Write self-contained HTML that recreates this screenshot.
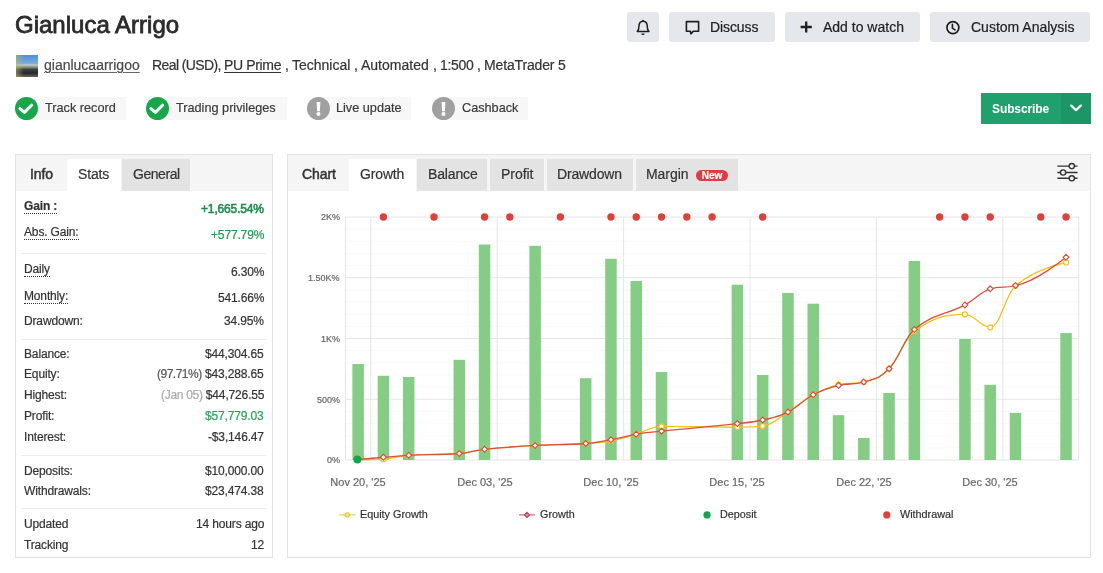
<!DOCTYPE html>
<html><head><meta charset="utf-8"><title>Gianluca Arrigo</title>
<style>
html,body{margin:0;padding:0;}
body{width:1103px;height:573px;overflow:hidden;background:#fff;position:relative;font-family:"Liberation Sans", sans-serif;}
.t{position:absolute;white-space:nowrap;line-height:1;will-change:transform;-webkit-text-stroke-width:0.2px;}
.r{position:absolute;box-sizing:border-box;}
div.r[style*="border:"]{box-sizing:border-box;}
u{text-underline-offset:2px;}
</style></head><body>
<div class="t " style="left:15.40px;top:12.88px;font-size:24px;color:#2b2b2b;font-weight:400;letter-spacing:0px;-webkit-text-stroke:0.8px #2b2b2b;">Gianluca Arrigo</div>
<div class="r" style="left:16px;top:55px;width:22px;height:22px;background:linear-gradient(90deg,rgba(190,190,90,.55) 0%,rgba(190,190,90,0) 35%),linear-gradient(180deg,#4d8fd6 0%,#78ade0 38%,#c0ccd0 45%,#8e9478 55%,#3c4044 66%,#23262b 82%,#6a6660 100%);"></div>
<div class="t " style="left:43.90px;top:58.15px;font-size:14px;color:#4a4a4a;font-weight:400;letter-spacing:0px;text-decoration:underline;text-underline-offset:2px;text-decoration-color:#666;">gianlucaarrigoo</div>
<div class="t " style="left:151.80px;top:57.75px;font-size:14px;color:#333;font-weight:400;letter-spacing:-0.6px;">Real (USD),</div>
<div class="t " style="left:224.00px;top:57.75px;font-size:14px;color:#333;font-weight:400;letter-spacing:-0.35px;"><u>PU Prime</u></div>
<div class="t " style="left:285.30px;top:57.75px;font-size:14px;color:#333;font-weight:400;letter-spacing:0px;">,</div>
<div class="t " style="left:291.60px;top:57.75px;font-size:14px;color:#333;font-weight:400;letter-spacing:0px;">Technical</div>
<div class="t " style="left:354.00px;top:57.75px;font-size:14px;color:#333;font-weight:400;letter-spacing:0px;">,</div>
<div class="t " style="left:360.60px;top:57.75px;font-size:14px;color:#333;font-weight:400;letter-spacing:0px;">Automated</div>
<div class="t " style="left:432.60px;top:57.75px;font-size:14px;color:#333;font-weight:400;letter-spacing:0px;">,</div>
<div class="t " style="left:439.60px;top:57.75px;font-size:14px;color:#333;font-weight:400;letter-spacing:-0.3px;">1:500</div>
<div class="t " style="left:476.60px;top:57.75px;font-size:14px;color:#333;font-weight:400;letter-spacing:0px;">,</div>
<div class="t " style="left:484.00px;top:57.75px;font-size:14px;color:#333;font-weight:400;letter-spacing:-0.15px;">MetaTrader 5</div>
<div class="r" style="left:26.5px;top:97px;width:99.5px;height:23px;background:#f7f7f7;"></div>
<svg class="r" style="left:15.00px;top:96.8px;width:23px;height:23px" viewBox="0 0 23 23"><circle cx="11.5" cy="11.5" r="11.5" fill="#18a64a"/><path d="M5.0 11.6 L9.4 15.4 L16.6 8.2" fill="none" stroke="#fff" stroke-width="3.0" stroke-linecap="round" stroke-linejoin="round"/></svg>
<div class="t " style="left:44.80px;top:102.15px;font-size:12.7px;color:#3a3a3a;font-weight:400;letter-spacing:0px;">Track record</div>
<div class="r" style="left:157.5px;top:97px;width:129.5px;height:23px;background:#f7f7f7;"></div>
<svg class="r" style="left:146.00px;top:96.8px;width:23px;height:23px" viewBox="0 0 23 23"><circle cx="11.5" cy="11.5" r="11.5" fill="#18a64a"/><path d="M5.0 11.6 L9.4 15.4 L16.6 8.2" fill="none" stroke="#fff" stroke-width="3.0" stroke-linecap="round" stroke-linejoin="round"/></svg>
<div class="t " style="left:175.50px;top:102.15px;font-size:12.7px;color:#3a3a3a;font-weight:400;letter-spacing:0px;">Trading privileges</div>
<div class="r" style="left:318.5px;top:97px;width:92.5px;height:23px;background:#f7f7f7;"></div>
<svg class="r" style="left:307.00px;top:96.8px;width:23px;height:23px" viewBox="0 0 23 23"><circle cx="11.5" cy="11.5" r="11.5" fill="#a0a0a0"/><path d="M9.6 5.6 Q9.6 5.0 10.2 5.0 L12.8 5.0 Q13.4 5.0 13.4 5.6 L12.9 14.2 L10.1 14.2 Z" fill="#fff"/><circle cx="11.5" cy="16.9" r="2.0" fill="#fff"/></svg>
<div class="t " style="left:336.00px;top:102.15px;font-size:12.7px;color:#3a3a3a;font-weight:400;letter-spacing:0px;">Live update</div>
<div class="r" style="left:443.5px;top:97px;width:84.5px;height:23px;background:#f7f7f7;"></div>
<svg class="r" style="left:432.00px;top:96.8px;width:23px;height:23px" viewBox="0 0 23 23"><circle cx="11.5" cy="11.5" r="11.5" fill="#a0a0a0"/><path d="M9.6 5.6 Q9.6 5.0 10.2 5.0 L12.8 5.0 Q13.4 5.0 13.4 5.6 L12.9 14.2 L10.1 14.2 Z" fill="#fff"/><circle cx="11.5" cy="16.9" r="2.0" fill="#fff"/></svg>
<div class="t " style="left:461.60px;top:102.15px;font-size:12.7px;color:#3a3a3a;font-weight:400;letter-spacing:0px;">Cashback</div>
<div class="r" style="left:627px;top:12px;width:32px;height:30px;background:#e4e7eb;border-radius:3px;"></div>
<div class="r" style="left:669px;top:12px;width:106px;height:30px;background:#e4e7eb;border-radius:3px;"></div>
<div class="r" style="left:785px;top:12px;width:135px;height:30px;background:#e4e7eb;border-radius:3px;"></div>
<div class="r" style="left:930px;top:12px;width:160px;height:30px;background:#e4e7eb;border-radius:3px;"></div>
<svg class="r" style="left:627px;top:12px;width:32px;height:30px" viewBox="0 0 32 30"><path d="M10.3 19.4 L21.9 19.4 C20.6 18.2 20.3 17 20.3 14.8 C20.3 11.3 18.6 9.2 16.1 9.2 C13.6 9.2 11.9 11.3 11.9 14.8 C11.9 17 11.6 18.2 10.3 19.4 Z" fill="none" stroke="#1e1e1e" stroke-width="1.5" stroke-linejoin="round"/><path d="M14.3 21.4 A1.7 1.7 0 0 0 17.7 21.4 Z" fill="#1e1e1e"/><circle cx="16" cy="8.6" r="0.9" fill="#1e1e1e"/></svg>
<svg class="r" style="left:669px;top:12px;width:40px;height:30px" viewBox="0 0 40 30"><path d="M17.4 9.6 L29.6 9.6 L29.6 19.2 L24.5 19.2 L21.8 21.8 L21.4 19.2 L17.4 19.2 Z" fill="none" stroke="#1e1e1e" stroke-width="1.6" stroke-linejoin="round"/></svg>
<svg class="r" style="left:785px;top:12px;width:40px;height:30px" viewBox="0 0 40 30"><path d="M21.2 9.4 V20.6 M15.6 15 H26.8" stroke="#1e1e1e" stroke-width="2.3"/></svg>
<svg class="r" style="left:930px;top:12px;width:40px;height:30px" viewBox="0 0 40 30"><circle cx="22.9" cy="15.6" r="6.0" fill="none" stroke="#1e1e1e" stroke-width="1.7"/><path d="M22.4 12.2 V16.2 L25 17.9" fill="none" stroke="#1e1e1e" stroke-width="1.6" stroke-linecap="round" stroke-linejoin="round"/></svg>
<div class="t " style="left:709.90px;top:19.95px;font-size:14px;color:#222;font-weight:400;letter-spacing:-0.1px;">Discuss</div>
<div class="t " style="left:822.60px;top:19.95px;font-size:14px;color:#222;font-weight:400;letter-spacing:0px;">Add to watch</div>
<div class="t " style="left:970.60px;top:19.95px;font-size:14px;color:#222;font-weight:400;letter-spacing:0px;">Custom Analysis</div>
<div class="r" style="left:981px;top:93px;width:80px;height:31px;background:#20a06e;"></div>
<div class="r" style="left:1061px;top:93px;width:30px;height:31px;background:#1c9567;"></div>
<div class="t " style="left:992.40px;top:102.94px;font-size:12px;color:#fff;font-weight:700;letter-spacing:-0.1px;-webkit-text-stroke-width:0;">Subscribe</div>
<svg class="r" style="left:1061px;top:93px;width:30px;height:31px" viewBox="0 0 30 31"><path d="M10.2 12.6 L15 17.2 L19.8 12.6" fill="none" stroke="#fff" stroke-width="2.2" stroke-linecap="round" stroke-linejoin="round"/></svg>
<div class="r" style="left:15px;top:154px;width:258px;height:404px;border:1px solid #e3e3e3;background:#fff"></div>
<div class="r" style="left:16px;top:155px;width:256px;height:36px;background:#f5f5f5;"></div>
<div class="r" style="left:67px;top:159px;width:54px;height:32px;background:#fff;"></div>
<div class="r" style="left:122px;top:159px;width:68px;height:32px;background:#e3e3e3;"></div>
<div class="t " style="left:30.10px;top:166.95px;font-size:14px;color:#333;font-weight:400;letter-spacing:-0.1px;-webkit-text-stroke:0.5px #333;">Info</div>
<div class="t " style="left:77.90px;top:166.95px;font-size:14px;color:#333;font-weight:400;letter-spacing:-0.15px;">Stats</div>
<div class="t " style="left:132.90px;top:166.95px;font-size:14px;color:#333;font-weight:400;letter-spacing:-0.45px;">General</div>
<div class="t " style="left:24.00px;top:200.14px;font-size:12px;color:#333;font-weight:700;letter-spacing:-0.15px;border-bottom:1px dotted #333;padding-bottom:0px;line-height:13px;">Gain :</div>
<div class="t " style="right:839.10px;top:202.74px;font-size:12px;color:#333;font-weight:400;letter-spacing:-0.15px;"><span style="color:#1e8c4c;-webkit-text-stroke:0.55px #1e8c4c">+1,665.54%</span></div>
<div class="t " style="left:24.00px;top:225.64px;font-size:12px;color:#333;font-weight:400;letter-spacing:-0.15px;border-bottom:1px dotted #333;padding-bottom:0px;line-height:13px;">Abs. Gain:</div>
<div class="t " style="right:839.10px;top:228.64px;font-size:12px;color:#333;font-weight:400;letter-spacing:-0.15px;"><span style="color:#22994f">+577.79%</span></div>
<div class="t " style="left:24.00px;top:262.84px;font-size:12px;color:#333;font-weight:400;letter-spacing:-0.15px;border-bottom:1px dotted #333;padding-bottom:0px;line-height:13px;">Daily</div>
<div class="t " style="right:839.10px;top:265.64px;font-size:12px;color:#333;font-weight:400;letter-spacing:-0.15px;">6.30%</div>
<div class="t " style="left:24.00px;top:289.94px;font-size:12px;color:#333;font-weight:400;letter-spacing:-0.15px;border-bottom:1px dotted #333;padding-bottom:0px;line-height:13px;">Monthly:</div>
<div class="t " style="right:839.10px;top:291.54px;font-size:12px;color:#333;font-weight:400;letter-spacing:-0.15px;">541.66%</div>
<div class="t " style="left:24.00px;top:315.34px;font-size:12px;color:#333;font-weight:400;letter-spacing:-0.15px;">Drawdown:</div>
<div class="t " style="right:839.10px;top:315.34px;font-size:12px;color:#333;font-weight:400;letter-spacing:-0.15px;">34.95%</div>
<div class="t " style="left:24.00px;top:347.64px;font-size:12px;color:#333;font-weight:400;letter-spacing:-0.15px;">Balance:</div>
<div class="t " style="right:839.10px;top:347.54px;font-size:12px;color:#333;font-weight:400;letter-spacing:-0.15px;">$44,304.65</div>
<div class="t " style="left:24.00px;top:368.34px;font-size:12px;color:#333;font-weight:400;letter-spacing:-0.15px;">Equity:</div>
<div class="t " style="right:839.10px;top:368.24px;font-size:12px;color:#333;font-weight:400;letter-spacing:-0.15px;"><span style="color:#555;letter-spacing:-0.5px">(97.71%)</span> $43,288.65</div>
<div class="t " style="left:24.00px;top:389.34px;font-size:12px;color:#333;font-weight:400;letter-spacing:-0.15px;">Highest:</div>
<div class="t " style="right:839.10px;top:389.04px;font-size:12px;color:#333;font-weight:400;letter-spacing:-0.15px;"><span style="color:#aaa;letter-spacing:-0.3px">(Jan 05)</span> $44,726.55</div>
<div class="t " style="left:24.00px;top:410.34px;font-size:12px;color:#333;font-weight:400;letter-spacing:-0.15px;">Profit:</div>
<div class="t " style="right:839.10px;top:410.14px;font-size:12px;color:#333;font-weight:400;letter-spacing:-0.15px;"><span style="color:#27a55a">$57,779.03</span></div>
<div class="t " style="left:24.00px;top:430.94px;font-size:12px;color:#333;font-weight:400;letter-spacing:-0.15px;">Interest:</div>
<div class="t " style="right:839.10px;top:430.64px;font-size:12px;color:#333;font-weight:400;letter-spacing:-0.15px;">-$3,146.47</div>
<div class="t " style="left:24.00px;top:464.54px;font-size:12px;color:#333;font-weight:400;letter-spacing:-0.15px;">Deposits:</div>
<div class="t " style="right:839.10px;top:464.54px;font-size:12px;color:#333;font-weight:400;letter-spacing:-0.15px;">$10,000.00</div>
<div class="t " style="left:24.00px;top:485.34px;font-size:12px;color:#333;font-weight:400;letter-spacing:-0.15px;">Withdrawals:</div>
<div class="t " style="right:839.10px;top:485.34px;font-size:12px;color:#333;font-weight:400;letter-spacing:-0.15px;">$23,474.38</div>
<div class="t " style="left:24.00px;top:518.14px;font-size:12px;color:#333;font-weight:400;letter-spacing:-0.15px;">Updated</div>
<div class="t " style="right:839.10px;top:518.14px;font-size:12px;color:#333;font-weight:400;letter-spacing:-0.15px;">14 hours ago</div>
<div class="t " style="left:24.00px;top:538.84px;font-size:12px;color:#333;font-weight:400;letter-spacing:-0.15px;">Tracking</div>
<div class="t " style="right:839.10px;top:538.84px;font-size:12px;color:#333;font-weight:400;letter-spacing:-0.15px;">12</div>
<div class="r" style="left:21px;top:252.5px;width:245px;height:1.0px;background:#ebebeb;"></div>
<div class="r" style="left:21px;top:338.5px;width:245px;height:1.0px;background:#ebebeb;"></div>
<div class="r" style="left:21px;top:455px;width:245px;height:1px;background:#ebebeb;"></div>
<div class="r" style="left:21px;top:508px;width:245px;height:1px;background:#ebebeb;"></div>
<div class="r" style="left:287px;top:154px;width:804px;height:404px;border:1px solid #e3e3e3;background:#fff"></div>
<div class="r" style="left:288px;top:155px;width:802px;height:36px;background:#f5f5f5;"></div>
<div class="r" style="left:349px;top:159px;width:67px;height:32px;background:#fff;"></div>
<div class="r" style="left:417px;top:159px;width:70px;height:32px;background:#e3e3e3;"></div>
<div class="r" style="left:490px;top:159px;width:54px;height:32px;background:#e3e3e3;"></div>
<div class="r" style="left:547px;top:159px;width:86px;height:32px;background:#e3e3e3;"></div>
<div class="r" style="left:636px;top:159px;width:102px;height:32px;background:#e3e3e3;"></div>
<div class="t " style="left:302.30px;top:167.05px;font-size:14px;color:#333;font-weight:400;letter-spacing:-0.1px;-webkit-text-stroke:0.5px #333;">Chart</div>
<div class="t " style="left:359.80px;top:167.05px;font-size:14px;color:#333;font-weight:400;letter-spacing:-0.15px;">Growth</div>
<div class="t " style="left:427.60px;top:167.05px;font-size:14px;color:#333;font-weight:400;letter-spacing:-0.15px;">Balance</div>
<div class="t " style="left:500.80px;top:167.05px;font-size:14px;color:#333;font-weight:400;letter-spacing:-0.05px;">Profit</div>
<div class="t " style="left:557.40px;top:167.05px;font-size:14px;color:#333;font-weight:400;letter-spacing:-0.15px;">Drawdown</div>
<div class="t " style="left:646.30px;top:167.05px;font-size:14px;color:#333;font-weight:400;letter-spacing:-0.05px;">Margin</div>
<div class="r" style="left:696px;top:170px;width:32px;height:11px;background:#e03c45;border-radius:6px;"></div>
<div class="t " style="left:512.00px;width:400px;text-align:center;top:170.73px;font-size:10px;color:#fff;font-weight:700;letter-spacing:0px;">New</div>
<svg class="r" style="left:1050px;top:160px;width:36px;height:26px" viewBox="1050 160 36 26"><g stroke="#333" stroke-width="1.4" fill="none"><path d="M1057.4 166.1 H1069.2 M1074.4 166.1 H1077.5"/><path d="M1057.4 172.5 H1060.5 M1065.7 172.5 H1077.5"/><path d="M1057.4 178.3 H1069.2 M1074.4 178.3 H1077.5"/><circle cx="1071.8" cy="166.1" r="2.6"/><circle cx="1063.1" cy="172.5" r="2.6"/><circle cx="1071.8" cy="178.3" r="2.6"/></g></svg>
<svg class="r" style="left:0;top:0;width:1103px;height:573px" viewBox="0 0 1103 573"><line x1="345.5" x2="1078.7" y1="229.15" y2="229.15" stroke="#fafafa" stroke-width="1"/><line x1="345.5" x2="1078.7" y1="241.30" y2="241.30" stroke="#fafafa" stroke-width="1"/><line x1="345.5" x2="1078.7" y1="253.45" y2="253.45" stroke="#fafafa" stroke-width="1"/><line x1="345.5" x2="1078.7" y1="265.60" y2="265.60" stroke="#fafafa" stroke-width="1"/><line x1="345.5" x2="1078.7" y1="289.90" y2="289.90" stroke="#fafafa" stroke-width="1"/><line x1="345.5" x2="1078.7" y1="302.05" y2="302.05" stroke="#fafafa" stroke-width="1"/><line x1="345.5" x2="1078.7" y1="314.20" y2="314.20" stroke="#fafafa" stroke-width="1"/><line x1="345.5" x2="1078.7" y1="326.35" y2="326.35" stroke="#fafafa" stroke-width="1"/><line x1="345.5" x2="1078.7" y1="350.65" y2="350.65" stroke="#fafafa" stroke-width="1"/><line x1="345.5" x2="1078.7" y1="362.80" y2="362.80" stroke="#fafafa" stroke-width="1"/><line x1="345.5" x2="1078.7" y1="374.95" y2="374.95" stroke="#fafafa" stroke-width="1"/><line x1="345.5" x2="1078.7" y1="387.10" y2="387.10" stroke="#fafafa" stroke-width="1"/><line x1="345.5" x2="1078.7" y1="411.40" y2="411.40" stroke="#fafafa" stroke-width="1"/><line x1="345.5" x2="1078.7" y1="423.55" y2="423.55" stroke="#fafafa" stroke-width="1"/><line x1="345.5" x2="1078.7" y1="435.70" y2="435.70" stroke="#fafafa" stroke-width="1"/><line x1="345.5" x2="1078.7" y1="447.85" y2="447.85" stroke="#fafafa" stroke-width="1"/><line x1="345.5" x2="1078.7" y1="217.00" y2="217.00" stroke="#e6e6e6" stroke-width="1"/><line x1="345.5" x2="1078.7" y1="277.75" y2="277.75" stroke="#e6e6e6" stroke-width="1"/><line x1="345.5" x2="1078.7" y1="338.50" y2="338.50" stroke="#e6e6e6" stroke-width="1"/><line x1="345.5" x2="1078.7" y1="399.25" y2="399.25" stroke="#e6e6e6" stroke-width="1"/><line x1="345.5" x2="1078.7" y1="460.00" y2="460.00" stroke="#e6e6e6" stroke-width="1"/><line x1="345.50" x2="345.50" y1="217.0" y2="460.0" stroke="#e6e6e6" stroke-width="1"/><line x1="370.78" x2="370.78" y1="217.0" y2="460.0" stroke="#e6e6e6" stroke-width="1"/><line x1="497.20" x2="497.20" y1="217.0" y2="460.0" stroke="#e6e6e6" stroke-width="1"/><line x1="623.61" x2="623.61" y1="217.0" y2="460.0" stroke="#e6e6e6" stroke-width="1"/><line x1="750.02" x2="750.02" y1="217.0" y2="460.0" stroke="#e6e6e6" stroke-width="1"/><line x1="876.44" x2="876.44" y1="217.0" y2="460.0" stroke="#e6e6e6" stroke-width="1"/><line x1="1002.85" x2="1002.85" y1="217.0" y2="460.0" stroke="#e6e6e6" stroke-width="1"/><line x1="1078.70" x2="1078.70" y1="217.0" y2="460.0" stroke="#e6e6e6" stroke-width="1"/><rect x="352.39" y="364" width="11.5" height="96.00" fill="#85cc85"/><rect x="377.67" y="375.8" width="11.5" height="84.20" fill="#85cc85"/><rect x="402.96" y="377" width="11.5" height="83.00" fill="#85cc85"/><rect x="453.52" y="359.8" width="11.5" height="100.20" fill="#85cc85"/><rect x="478.81" y="244.5" width="11.5" height="215.50" fill="#85cc85"/><rect x="529.37" y="245.8" width="11.5" height="214.20" fill="#85cc85"/><rect x="579.94" y="378.2" width="11.5" height="81.80" fill="#85cc85"/><rect x="605.22" y="258.8" width="11.5" height="201.20" fill="#85cc85"/><rect x="630.50" y="281" width="11.5" height="179.00" fill="#85cc85"/><rect x="655.78" y="372" width="11.5" height="88.00" fill="#85cc85"/><rect x="731.63" y="284.7" width="11.5" height="175.30" fill="#85cc85"/><rect x="756.92" y="375" width="11.5" height="85.00" fill="#85cc85"/><rect x="782.20" y="293" width="11.5" height="167.00" fill="#85cc85"/><rect x="807.48" y="303.7" width="11.5" height="156.30" fill="#85cc85"/><rect x="832.76" y="415.2" width="11.5" height="44.80" fill="#85cc85"/><rect x="858.05" y="438" width="11.5" height="22.00" fill="#85cc85"/><rect x="883.33" y="393" width="11.5" height="67.00" fill="#85cc85"/><rect x="908.61" y="261" width="11.5" height="199.00" fill="#85cc85"/><rect x="959.18" y="339" width="11.5" height="121.00" fill="#85cc85"/><rect x="984.46" y="384.8" width="11.5" height="75.20" fill="#85cc85"/><rect x="1009.74" y="412.9" width="11.5" height="47.10" fill="#85cc85"/><rect x="1060.31" y="333.1" width="11.5" height="126.90" fill="#85cc85"/><path d="M 358.14 460.00 C 358.14 460.00 373.31 460.00 383.42 459.20 C 393.54 458.40 398.59 456.06 408.71 455.30 C 428.93 453.78 439.05 455.10 459.27 453.50 C 469.39 452.70 474.44 450.37 484.56 449.30 C 504.78 447.17 514.89 446.66 535.12 445.50 C 555.35 444.34 565.46 444.70 585.69 443.50 C 595.80 442.90 600.86 442.86 610.97 441.00 C 621.08 439.14 626.14 437.14 636.25 434.20 C 646.36 431.26 651.42 426.30 661.53 426.30 C 691.87 426.30 707.04 427.20 737.38 427.20 C 747.50 427.20 752.55 427.20 762.67 426.10 C 772.78 425.00 777.84 418.36 787.95 412.10 C 798.06 405.84 803.12 400.30 813.23 394.80 C 823.34 389.30 828.40 387.16 838.51 384.60 C 848.63 382.04 853.68 384.60 863.80 382.00 C 873.91 379.40 878.97 378.96 889.08 368.80 C 899.19 358.64 904.25 338.47 914.36 331.20 C 934.59 316.67 944.70 314.30 964.93 314.30 C 975.04 314.30 980.10 327.30 990.21 327.30 C 1000.32 327.30 1005.38 294.44 1015.49 285.80 C 1035.72 268.52 1066.06 262.50 1066.06 262.50" fill="none" stroke="#f2c21b" stroke-width="1.3"/><circle cx="358.14" cy="460.00" r="2.5" fill="#fff" stroke="#f2c21b" stroke-width="1.2"/><circle cx="383.42" cy="459.20" r="2.5" fill="#fff" stroke="#f2c21b" stroke-width="1.2"/><circle cx="408.71" cy="455.30" r="2.5" fill="#fff" stroke="#f2c21b" stroke-width="1.2"/><circle cx="459.27" cy="453.50" r="2.5" fill="#fff" stroke="#f2c21b" stroke-width="1.2"/><circle cx="484.56" cy="449.30" r="2.5" fill="#fff" stroke="#f2c21b" stroke-width="1.2"/><circle cx="535.12" cy="445.50" r="2.5" fill="#fff" stroke="#f2c21b" stroke-width="1.2"/><circle cx="585.69" cy="443.50" r="2.5" fill="#fff" stroke="#f2c21b" stroke-width="1.2"/><circle cx="610.97" cy="441.00" r="2.5" fill="#fff" stroke="#f2c21b" stroke-width="1.2"/><circle cx="636.25" cy="434.20" r="2.5" fill="#fff" stroke="#f2c21b" stroke-width="1.2"/><circle cx="661.53" cy="426.30" r="2.5" fill="#fff" stroke="#f2c21b" stroke-width="1.2"/><circle cx="737.38" cy="427.20" r="2.5" fill="#fff" stroke="#f2c21b" stroke-width="1.2"/><circle cx="762.67" cy="426.10" r="2.5" fill="#fff" stroke="#f2c21b" stroke-width="1.2"/><circle cx="787.95" cy="412.10" r="2.5" fill="#fff" stroke="#f2c21b" stroke-width="1.2"/><circle cx="813.23" cy="394.80" r="2.5" fill="#fff" stroke="#f2c21b" stroke-width="1.2"/><circle cx="838.51" cy="384.60" r="2.5" fill="#fff" stroke="#f2c21b" stroke-width="1.2"/><circle cx="863.80" cy="382.00" r="2.5" fill="#fff" stroke="#f2c21b" stroke-width="1.2"/><circle cx="889.08" cy="368.80" r="2.5" fill="#fff" stroke="#f2c21b" stroke-width="1.2"/><circle cx="914.36" cy="331.20" r="2.5" fill="#fff" stroke="#f2c21b" stroke-width="1.2"/><circle cx="964.93" cy="314.30" r="2.5" fill="#fff" stroke="#f2c21b" stroke-width="1.2"/><circle cx="990.21" cy="327.30" r="2.5" fill="#fff" stroke="#f2c21b" stroke-width="1.2"/><circle cx="1015.49" cy="285.80" r="2.5" fill="#fff" stroke="#f2c21b" stroke-width="1.2"/><circle cx="1066.06" cy="262.50" r="2.5" fill="#fff" stroke="#f2c21b" stroke-width="1.2"/><path d="M 358.14 459.50 C 358.14 459.50 373.31 458.14 383.42 457.30 C 393.54 456.46 398.59 455.81 408.71 455.30 C 428.93 454.29 439.05 455.10 459.27 453.50 C 469.39 452.70 474.44 450.37 484.56 449.30 C 504.78 447.17 514.89 446.66 535.12 445.50 C 555.35 444.34 565.46 445.02 585.69 443.50 C 595.80 442.74 600.86 441.66 610.97 439.80 C 621.08 437.94 626.14 435.92 636.25 434.20 C 646.36 432.48 651.42 432.26 661.53 431.20 C 691.87 428.02 707.04 426.96 737.38 423.60 C 747.50 422.48 752.55 422.30 762.67 420.00 C 772.78 417.70 777.84 417.14 787.95 412.10 C 798.06 407.06 803.12 400.14 813.23 394.80 C 823.34 389.46 828.40 387.96 838.51 385.40 C 848.63 382.84 853.68 385.32 863.80 382.00 C 873.91 378.68 878.97 379.28 889.08 368.80 C 899.19 358.32 904.25 338.12 914.36 329.60 C 934.59 312.56 944.70 315.78 964.93 304.90 C 975.04 299.46 980.10 292.10 990.21 288.80 C 1000.32 285.50 1005.38 288.80 1015.49 285.50 C 1035.72 282.20 1066.06 257.30 1066.06 257.30" fill="none" stroke="#d9503c" stroke-width="1.3"/><path d="M 358.14 456.60 L 361.04 459.50 L 358.14 462.40 L 355.24 459.50 Z" fill="#fff" stroke="#d9503c" stroke-width="1.2"/><path d="M 383.42 454.40 L 386.32 457.30 L 383.42 460.20 L 380.52 457.30 Z" fill="#fff" stroke="#d9503c" stroke-width="1.2"/><path d="M 408.71 452.40 L 411.61 455.30 L 408.71 458.20 L 405.81 455.30 Z" fill="#fff" stroke="#d9503c" stroke-width="1.2"/><path d="M 459.27 450.60 L 462.17 453.50 L 459.27 456.40 L 456.37 453.50 Z" fill="#fff" stroke="#d9503c" stroke-width="1.2"/><path d="M 484.56 446.40 L 487.46 449.30 L 484.56 452.20 L 481.66 449.30 Z" fill="#fff" stroke="#d9503c" stroke-width="1.2"/><path d="M 535.12 442.60 L 538.02 445.50 L 535.12 448.40 L 532.22 445.50 Z" fill="#fff" stroke="#d9503c" stroke-width="1.2"/><path d="M 585.69 440.60 L 588.59 443.50 L 585.69 446.40 L 582.79 443.50 Z" fill="#fff" stroke="#d9503c" stroke-width="1.2"/><path d="M 610.97 436.90 L 613.87 439.80 L 610.97 442.70 L 608.07 439.80 Z" fill="#fff" stroke="#d9503c" stroke-width="1.2"/><path d="M 636.25 431.30 L 639.15 434.20 L 636.25 437.10 L 633.35 434.20 Z" fill="#fff" stroke="#d9503c" stroke-width="1.2"/><path d="M 661.53 428.30 L 664.43 431.20 L 661.53 434.10 L 658.63 431.20 Z" fill="#fff" stroke="#d9503c" stroke-width="1.2"/><path d="M 737.38 420.70 L 740.28 423.60 L 737.38 426.50 L 734.48 423.60 Z" fill="#fff" stroke="#d9503c" stroke-width="1.2"/><path d="M 762.67 417.10 L 765.57 420.00 L 762.67 422.90 L 759.77 420.00 Z" fill="#fff" stroke="#d9503c" stroke-width="1.2"/><path d="M 787.95 409.20 L 790.85 412.10 L 787.95 415.00 L 785.05 412.10 Z" fill="#fff" stroke="#d9503c" stroke-width="1.2"/><path d="M 813.23 391.90 L 816.13 394.80 L 813.23 397.70 L 810.33 394.80 Z" fill="#fff" stroke="#d9503c" stroke-width="1.2"/><path d="M 838.51 382.50 L 841.41 385.40 L 838.51 388.30 L 835.61 385.40 Z" fill="#fff" stroke="#d9503c" stroke-width="1.2"/><path d="M 863.80 379.10 L 866.70 382.00 L 863.80 384.90 L 860.90 382.00 Z" fill="#fff" stroke="#d9503c" stroke-width="1.2"/><path d="M 889.08 365.90 L 891.98 368.80 L 889.08 371.70 L 886.18 368.80 Z" fill="#fff" stroke="#d9503c" stroke-width="1.2"/><path d="M 914.36 326.70 L 917.26 329.60 L 914.36 332.50 L 911.46 329.60 Z" fill="#fff" stroke="#d9503c" stroke-width="1.2"/><path d="M 964.93 302.00 L 967.83 304.90 L 964.93 307.80 L 962.03 304.90 Z" fill="#fff" stroke="#d9503c" stroke-width="1.2"/><path d="M 990.21 285.90 L 993.11 288.80 L 990.21 291.70 L 987.31 288.80 Z" fill="#fff" stroke="#d9503c" stroke-width="1.2"/><path d="M 1015.49 282.60 L 1018.39 285.50 L 1015.49 288.40 L 1012.59 285.50 Z" fill="#fff" stroke="#d9503c" stroke-width="1.2"/><path d="M 1066.06 254.40 L 1068.96 257.30 L 1066.06 260.20 L 1063.16 257.30 Z" fill="#fff" stroke="#d9503c" stroke-width="1.2"/><circle cx="357.34" cy="459.6" r="4" fill="#17a34a"/><circle cx="383.42" cy="217" r="3.7" fill="#e0403a"/><circle cx="433.99" cy="217" r="3.7" fill="#e0403a"/><circle cx="484.56" cy="217" r="3.7" fill="#e0403a"/><circle cx="509.84" cy="217" r="3.7" fill="#e0403a"/><circle cx="560.40" cy="217" r="3.7" fill="#e0403a"/><circle cx="610.97" cy="217" r="3.7" fill="#e0403a"/><circle cx="636.25" cy="217" r="3.7" fill="#e0403a"/><circle cx="661.53" cy="217" r="3.7" fill="#e0403a"/><circle cx="686.82" cy="217" r="3.7" fill="#e0403a"/><circle cx="712.10" cy="217" r="3.7" fill="#e0403a"/><circle cx="762.67" cy="217" r="3.7" fill="#e0403a"/><circle cx="939.64" cy="217" r="3.7" fill="#e0403a"/><circle cx="964.93" cy="217" r="3.7" fill="#e0403a"/><circle cx="990.21" cy="217" r="3.7" fill="#e0403a"/><circle cx="1040.78" cy="217" r="3.7" fill="#e0403a"/><circle cx="1066.06" cy="217" r="3.7" fill="#e0403a"/><line x1="339" x2="355.5" y1="514.9" y2="514.9" stroke="#eccb4a" stroke-width="1.1"/><circle cx="347.2" cy="514.9" r="2.1" fill="#f7e67a" stroke="#e9c22c" stroke-width="1.1"/><line x1="519" x2="535" y1="514.9" y2="514.9" stroke="#cf5c6c" stroke-width="1.1"/><path d="M 527 512.3 L 529.6 514.9 L 527 517.5 L 524.4 514.9 Z" fill="#ef8a95" stroke="#c2414f" stroke-width="1.1"/><circle cx="707" cy="514.9" r="3.6" fill="#17a34a"/><circle cx="886.8" cy="514.9" r="3.6" fill="#e0403a"/></svg>
<div class="t " style="right:763.00px;top:213.38px;font-size:9px;color:#666;font-weight:400;letter-spacing:0px;">2K%</div>
<div class="t " style="right:763.00px;top:274.13px;font-size:9px;color:#666;font-weight:400;letter-spacing:0px;">1.50K%</div>
<div class="t " style="right:763.00px;top:334.88px;font-size:9px;color:#666;font-weight:400;letter-spacing:0px;">1K%</div>
<div class="t " style="right:763.00px;top:395.63px;font-size:9px;color:#666;font-weight:400;letter-spacing:0px;">500%</div>
<div class="t " style="right:763.00px;top:456.38px;font-size:9px;color:#666;font-weight:400;letter-spacing:0px;">0%</div>
<div class="t " style="left:158.14px;width:400px;text-align:center;top:476.69px;font-size:11px;color:#666;font-weight:400;letter-spacing:0px;">Nov 20, '25</div>
<div class="t " style="left:284.56px;width:400px;text-align:center;top:476.69px;font-size:11px;color:#666;font-weight:400;letter-spacing:0px;">Dec 03, '25</div>
<div class="t " style="left:410.97px;width:400px;text-align:center;top:476.69px;font-size:11px;color:#666;font-weight:400;letter-spacing:0px;">Dec 10, '25</div>
<div class="t " style="left:537.38px;width:400px;text-align:center;top:476.69px;font-size:11px;color:#666;font-weight:400;letter-spacing:0px;">Dec 15, '25</div>
<div class="t " style="left:663.80px;width:400px;text-align:center;top:476.69px;font-size:11px;color:#666;font-weight:400;letter-spacing:0px;">Dec 22, '25</div>
<div class="t " style="left:790.21px;width:400px;text-align:center;top:476.69px;font-size:11px;color:#666;font-weight:400;letter-spacing:0px;">Dec 30, '25</div>
<div class="t " style="left:359.90px;top:509.06px;font-size:10.8px;color:#333;font-weight:400;letter-spacing:0px;">Equity Growth</div>
<div class="t " style="left:539.80px;top:509.06px;font-size:10.8px;color:#333;font-weight:400;letter-spacing:0px;">Growth</div>
<div class="t " style="left:719.90px;top:509.06px;font-size:10.8px;color:#333;font-weight:400;letter-spacing:0px;">Deposit</div>
<div class="t " style="left:899.60px;top:509.06px;font-size:10.8px;color:#333;font-weight:400;letter-spacing:0px;">Withdrawal</div>

</body></html>
